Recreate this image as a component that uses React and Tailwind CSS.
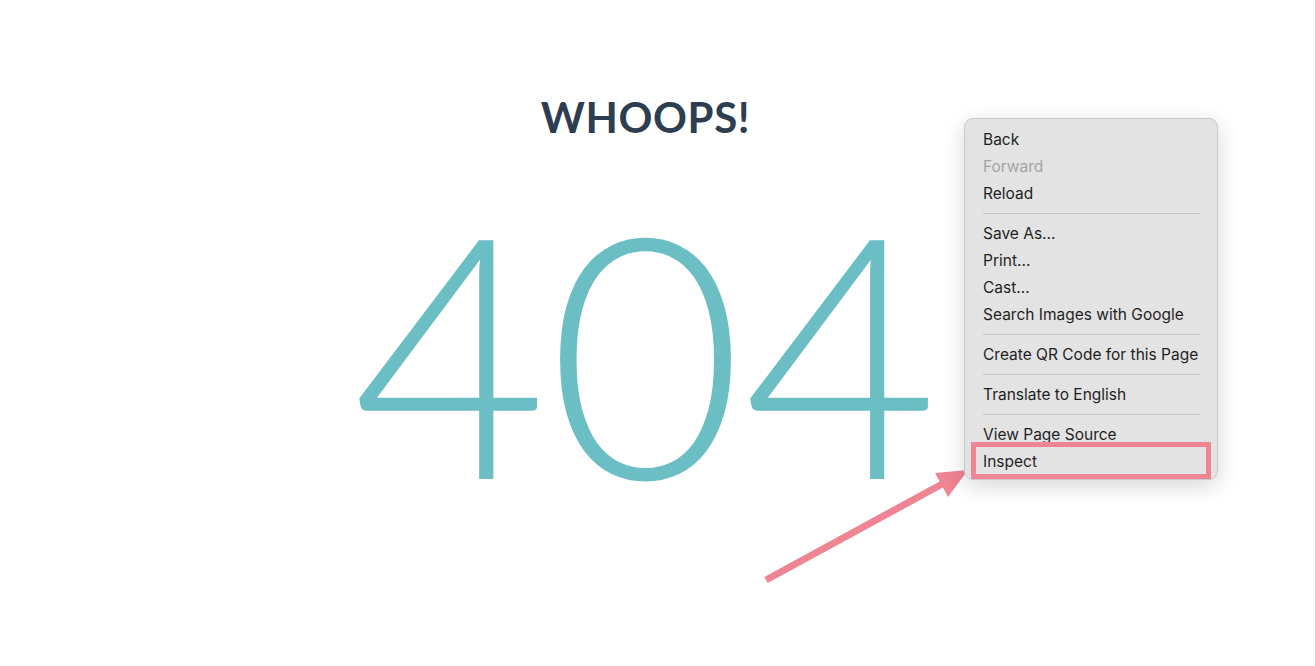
import React from 'react';

const menuGroups = [
  [
    { label: 'Back' },
    { label: 'Forward', disabled: true },
    { label: 'Reload' },
  ],
  [
    { label: 'Save As...' },
    { label: 'Print...' },
    { label: 'Cast...' },
    { label: 'Search Images with Google' },
  ],
  [{ label: 'Create QR Code for this Page' }],
  [{ label: 'Translate to English' }],
  [{ label: 'View Page Source' }, { label: 'Inspect' }],
];

const ContextMenu = () => (
  <div className="absolute left-[964px] top-[118px] w-[254px] rounded-[9px] border border-[#c9c9c9] bg-[#e3e3e3] pt-[7px] pb-[4px] shadow-[0_6px_22px_rgba(0,0,0,0.16)] font-['Inter',sans-serif] text-[15.5px] text-[#1f1f1f]">
    {menuGroups.map((group, gi) => (
      <div key={gi}>
        {gi > 0 && (
          <div className="flex h-[13px] items-center pl-[18px] pr-[17px]">
            <div className="h-px w-full bg-[#c6c6c6]" />
          </div>
        )}
        {group.map((item) => (
          <div
            key={item.label}
            className={`flex h-[27px] items-center pl-[18px] ${item.disabled ? 'text-[#a3a3a3]' : ''}`}
          >
            {item.label}
          </div>
        ))}
      </div>
    ))}
    {/* highlight round "Inspect" */}
    <div className="absolute left-[6px] top-[323px] h-[37px] w-[240px] border-[5px] border-[#ef8493]" />
  </div>
);

const Arrow = () => (
  <svg className="absolute left-0 top-0" width="1316" height="666">
    <line x1="766" y1="580" x2="944" y2="483" stroke="#ef8493" strokeWidth="7" />
    <polygon points="968,470 935,473 948,497" fill="#ef8493" />
  </svg>
);

export default function App() {
  return (
    <div className="relative h-[666px] w-full overflow-hidden border-r border-[#cfcfcf] bg-white font-['Lato',sans-serif]">
      <div className="flex flex-col items-center pt-[96px] pr-[24px]">
        <h1 className="text-[42px] font-bold leading-none tracking-[0.6px] text-[#2c3e50]">WHOOPS!</h1>
        <div className="mt-[42px] text-[337px] font-light leading-none text-[#6bbfc4]">404</div>
      </div>
      <Arrow />
      <ContextMenu />
    </div>
  );
}
